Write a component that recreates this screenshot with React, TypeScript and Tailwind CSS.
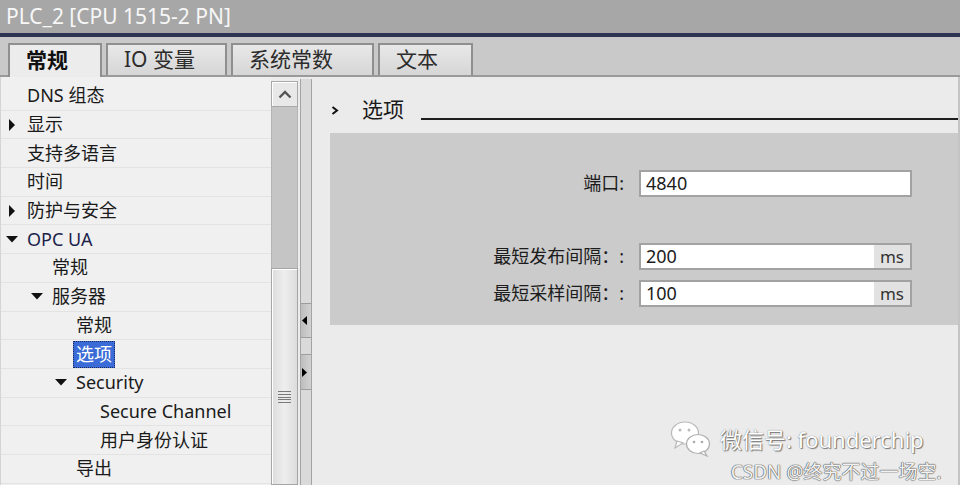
import React from "react";

type Row = { t: string; l: number; a?: "r" | "d"; sel?: boolean };

const rows: Row[] = [
  { t: "DNS 组态", l: 0 },
  { t: "显示", l: 0, a: "r" },
  { t: "支持多语言", l: 0 },
  { t: "时间", l: 0 },
  { t: "防护与安全", l: 0, a: "r" },
  { t: "OPC UA", l: 0, a: "d" },
  { t: "常规", l: 1 },
  { t: "服务器", l: 1, a: "d" },
  { t: "常规", l: 2 },
  { t: "选项", l: 2, sel: true },
  { t: "Security", l: 2, a: "d" },
  { t: "Secure Channel", l: 3 },
  { t: "用户身份认证", l: 3 },
  { t: "导出", l: 2 },
];

const indent = ["pl-[0px]", "pl-[25px]", "pl-[49px]", "pl-[73px]"];

const tabs = [
  { t: "常规", w: "w-[94px]", active: true },
  { t: "IO 变量", w: "w-[121px]" },
  { t: "系统常数", w: "w-[143px]" },
  { t: "文本", w: "w-[95px]" },
];

const Arrow = ({ a }: { a?: "r" | "d" }) => {
  if (a === "r")
    return (
      <svg width="8" height="12" viewBox="0 0 8 12">
        <path d="M1 0 L7 6 L1 12 Z" fill="#111" />
      </svg>
    );
  if (a === "d")
    return (
      <svg width="12" height="7" viewBox="0 0 12 7">
        <path d="M0 0 L12 0 L6 6.5 Z" fill="#111" />
      </svg>
    );
  return null;
};

const Field = ({ label, value, unit }: { label: string; value: string; unit?: boolean }) => (
  <>
    <div className="h-[27px] flex items-center justify-end text-[18px] text-[#1c1c1c]">{label}</div>
    <div className="h-[27px] flex border-2 border-[#a2a2a2] bg-white">
      <div className="flex-1 flex items-center pl-[5px] text-[18px] text-[#1c1c1c]">{value}</div>
      {unit && (
        <div className="w-[36px] bg-[#e2e2e2] flex items-center justify-center text-[17px] text-[#333]">ms</div>
      )}
    </div>
  </>
);

export default function App() {
  return (
    <div
      className="w-[960px] h-[485px] overflow-hidden relative bg-[#ebebeb] flex flex-col"
      style={{ fontFamily: '"Noto Sans", "Noto Sans CJK SC", sans-serif' }}
    >
      {/* title */}
      <div className="h-[33px] shrink-0 bg-[#a7a7a7] pl-[6px] flex items-center text-[21px] text-[#f7f7f7]">
        PLC_2 [CPU 1515-2 PN]
      </div>
      <div className="h-[4px] shrink-0 bg-[#2d3553]" />

      {/* tabs */}
      <div className="h-[40px] shrink-0 bg-[#c9c9c9] border-b-2 border-[#9a9a9a] flex items-end pl-[8px] gap-[4px]">
        {tabs.map((tab) =>
          tab.active ? (
            <div
              key={tab.t}
              className={`${tab.w} h-[34px] -mb-[2px] bg-[#ececec] border-t-2 border-l-2 border-r-2 border-[#8f8f8f] pl-[16px] flex items-center text-[21px] font-bold text-[#111]`}
            >
              {tab.t}
            </div>
          ) : (
            <div
              key={tab.t}
              className={`${tab.w} h-[32px] bg-gradient-to-b from-[#e8e8e8] to-[#d6d6d6] border-2 border-b-0 border-[#8f8f8f] pl-[16px] flex items-center text-[21px] text-[#2c2c2c]`}
            >
              {tab.t}
            </div>
          )
        )}
      </div>

      {/* body */}
      <div className="flex-1 flex min-h-0">
        {/* tree */}
        <div className="w-[271px] shrink-0 bg-[#f0f0f0] border-l border-[#d4d4d4] pt-[5px]">
          {rows.map((r, i) => (
            <div
              key={i}
              className={`h-[28.7px] border-b border-[#e3e3e3] flex items-center ${indent[r.l]} text-[18px] text-[#1a1a1a]`}
            >
              <div className="w-[22px] flex justify-center">
                <Arrow a={r.a} />
              </div>
              <div className="w-[4px]" />
              {r.sel ? (
                <span className="-ml-[3px] px-[2px] h-[27px] flex items-center bg-[#3a6bd6] text-white border border-dotted border-[#1a2a60]">
                  {r.t}
                </span>
              ) : (
                <span className={r.t === "OPC UA" ? "text-[#1c1f4a]" : ""}>{r.t}</span>
              )}
            </div>
          ))}
        </div>

        {/* scrollbar */}
        <div className="w-[27px] shrink-0 flex flex-col pt-[4px] bg-[#ececec]">
          <div className="h-[26px] bg-[#e8e8e8] border border-[#a9a9a9] shadow-[inset_1px_1px_0_#ffffff] flex items-center justify-center">
            <svg width="14" height="9" viewBox="0 0 14 9">
              <path d="M1.5 7.5 L7 2 L12.5 7.5" stroke="#555" strokeWidth="2.4" fill="none" />
            </svg>
          </div>
          <div className="h-[161px] bg-[#c5c5c5] border-x border-[#b4b4b4]" />
          <div className="flex-1 border border-[#a6a6a6] bg-gradient-to-r from-[#dcdcdc] via-[#eeeeee] to-[#dcdcdc] shadow-[inset_1px_1px_0_#ffffff] pt-[122px] flex justify-center">
            <div className="w-[13px] h-[12px] flex flex-col justify-between">
              <div className="h-px bg-[#7a7a7a]" />
              <div className="h-px bg-[#7a7a7a]" />
              <div className="h-px bg-[#7a7a7a]" />
              <div className="h-px bg-[#7a7a7a]" />
              <div className="h-px bg-[#7a7a7a]" />
            </div>
          </div>
        </div>

        <div className="w-[2px] shrink-0 bg-[#ececec]" />

        {/* splitter */}
        <div className="w-[12px] shrink-0 mt-[2px] bg-[#dadada] border-x border-[#a4a4a4] flex flex-col pt-[224px]">
          <div className="h-[35px] bg-gradient-to-r from-[#bdbdbd] to-[#d2d2d2] border-y border-[#9d9d9d] flex items-center justify-start pl-[1px]">
            <svg width="5" height="9" viewBox="0 0 5 9">
              <path d="M5 0 L0 4.5 L5 9 Z" fill="#000" />
            </svg>
          </div>
          <div className="h-[16px]" />
          <div className="h-[36px] bg-gradient-to-r from-[#bdbdbd] to-[#d2d2d2] border-y border-[#9d9d9d] flex items-center justify-start pl-[1px]">
            <svg width="5" height="9" viewBox="0 0 5 9">
              <path d="M0 0 L5 4.5 L0 9 Z" fill="#000" />
            </svg>
          </div>
        </div>

        {/* right panel */}
        <div className="flex-1 pl-[18px] border-r-2 border-[#c4c4c4] flex flex-col">
          <div className="h-[28px] mt-[19px] flex items-center">
            <svg width="8" height="9" viewBox="0 0 8 9" className="ml-[1px]">
              <path d="M1.5 1 L6 4.5 L1.5 8" stroke="#111" strokeWidth="2" fill="none" />
            </svg>
            <span className="ml-[23px] text-[21px] text-[#1a1a1a]">选项</span>
            <div className="flex-1 ml-[17px] mt-[18px] h-[2px] bg-[#1e1e1e]" />
          </div>
          <div className="mt-[9px] bg-[#cbcbcb] pt-[37px] pb-[18px] pr-[46px] grid grid-cols-[294px_273px] gap-x-[15px]">
            <Field label="端口:" value="4840" />
            <div className="h-[46px] col-span-2" />
            <Field label="最短发布间隔：:" value="200" unit />
            <div className="h-[10px] col-span-2" />
            <Field label="最短采样间隔：:" value="100" unit />
          </div>
        </div>
      </div>

      {/* watermark */}
      <div className="absolute left-[670px] top-[420px] flex flex-col items-end">
        <div className="flex items-center gap-[8px]">
          <svg width="42" height="38" viewBox="0 0 42 38">
            <ellipse cx="15" cy="13" rx="13.5" ry="11" fill="#fff" stroke="#b9b9b9" strokeWidth="1.2" />
            <path d="M7 21 L5 28 L13 23 Z" fill="#fff" stroke="#b9b9b9" strokeWidth="1.2" />
            <circle cx="10" cy="10" r="1.5" fill="#bbb" />
            <circle cx="19" cy="10" r="1.5" fill="#bbb" />
            <ellipse cx="28" cy="24" rx="11.5" ry="9.5" fill="#fff" stroke="#b0b0b0" strokeWidth="1.2" />
            <path d="M34 31 L37 36 L30 33 Z" fill="#fff" stroke="#b0b0b0" strokeWidth="1.2" />
            <circle cx="24" cy="22" r="1.3" fill="#aaa" />
            <circle cx="32" cy="22" r="1.3" fill="#aaa" />
          </svg>
          <span
            className="text-[22px] text-white leading-none"
            style={{ textShadow: "0 0 1px #666, 1px 1px 1px #777" }}
          >
            微信号: founderchip
          </span>
        </div>
        <div
          className="text-[19px] text-[#f2f2f2] leading-none mt-[5px] -mr-[18px] whitespace-nowrap"
          style={{ textShadow: "0 0 1px #555, 0 0 1px #555, 0 0 1px #555" }}
        >
          CSDN @终究不过一场空.
        </div>
      </div>
    </div>
  );
}
